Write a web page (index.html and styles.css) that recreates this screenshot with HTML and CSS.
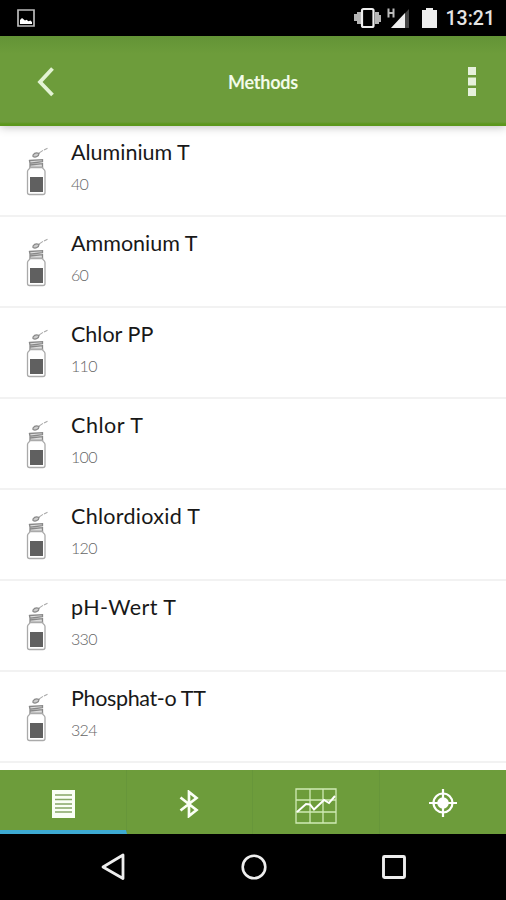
FILE: index.html
```html
<!DOCTYPE html>
<html lang="en">
<head>
<meta charset="utf-8">
<title>Methods</title>
<link rel="stylesheet" href="styles.css">
</head>
<body>
<svg class="defs" width="0" height="0" aria-hidden="true">
  <symbol id="bottle" viewBox="0 0 24 50">
    <path d="M12 7l2-1.600M14 5.400l3-2M18 3l3.500-1.800" fill="none" stroke="#aaa" stroke-width="1.100"/>
    <path d="M7 8c1.500-2.200 4-2.500 6-1.500 0 2.500-3.500 4.500-6 3z" fill="#ccc" stroke="#888" stroke-width="1.200"/>
    <path d="M3.500 13.500l13-.8v2l-12.500 1.500zM4 18l12.500-1.300M4 16v4.500h12.500V16" fill="#ddd" stroke="#888" stroke-width="1.300"/>
    <path d="M4 20.500c0 1.500-2.500 1.500-2.500 4v21q0 2 2 2h13.500q2 0 2-2v-21c0-2.500-2.500-2.500-2.500-4z" fill="#fff" stroke="#aaa" stroke-width="1.300"/>
    <path d="M4 30h13v15H4z" fill="#606060"/>
  </symbol>
</svg>
<div class="screen">
  <div class="status">
    <svg class="status-pic" width="18" height="18" viewBox="0 0 18 18"><path d="M1 1h16v16H1z" fill="none" stroke="#bbb" stroke-width="1.700"/><path d="M3 15v-4l2-2 3 2.500 1.500-.8 2 1.500 2-.8L15 13v2z" fill="#fff"/></svg>
    <svg width="75" height="24" viewBox="0 0 75 24">
      <path d="M0 8h3V6h4v12H3v-3H0zM27 9v7h-2v2h-4V6h4v3z" fill="#b5b5b5"/>
      <rect x="8" y="3" width="11.500" height="18" rx="1.500" fill="#000" stroke="#eee" stroke-width="2.200"/>
      <path d="M34.500 2.500v9M39.500 2.500v9M34 7h6" stroke="#bbb" stroke-width="2"/>
      <path d="M37 22L55 3v19z" fill="#444"/><path d="M37 22L51 7v15z" fill="#eee"/>
    </svg>
    <svg class="battery" width="15" height="20" viewBox="0 0 15 20"><path d="M4 0h7v2h4v18H0V2h4z" fill="#eee"/></svg>
    <span class="clock">13:21</span>
  </div>
  <header class="bar">
    <svg width="18" height="30" viewBox="0 0 18 30"><path d="M15.500 1.500L3 15l12.500 13" fill="none" stroke="#e3f3d4" stroke-width="3.800"/></svg>
    <h1>Methods</h1>
    <svg width="8" height="30" viewBox="0 0 8 30"><path d="M0 0h8v8H0zM0 10.500h8v8H0zM0 21h8v8H0z" fill="#e6f1dc"/></svg>
  </header>
  <main class="list">
    <div class="row"><svg class="bottle"><use href="#bottle"/></svg><div><h2>Aluminium T</h2><p>40</p></div></div>
    <div class="row"><svg class="bottle"><use href="#bottle"/></svg><div><h2>Ammonium T</h2><p>60</p></div></div>
    <div class="row"><svg class="bottle"><use href="#bottle"/></svg><div><h2>Chlor PP</h2><p>110</p></div></div>
    <div class="row"><svg class="bottle"><use href="#bottle"/></svg><div><h2 class="chlor">Chlor T</h2><p>100</p></div></div>
    <div class="row"><svg class="bottle"><use href="#bottle"/></svg><div><h2 class="dioxid">Chlordioxid T</h2><p>120</p></div></div>
    <div class="row"><svg class="bottle"><use href="#bottle"/></svg><div><h2 class="ph">pH-Wert T</h2><p>330</p></div></div>
    <div class="row"><svg class="bottle"><use href="#bottle"/></svg><div><h2 class="phosphat">Phosphat-o TT</h2><p>324</p></div></div>
  </main>
  <nav class="tabs">
    <div class="tab active"><svg width="23" height="28" viewBox="0 0 23 28"><path d="M0 0h23v28H0z" fill="#fafff5"/><path d="M3 5h17M3 9.500h17M3 14h17M3 18h17M3 22h17" stroke="#86a766" stroke-width="1.500"/></svg></div>
    <div class="tab"><svg width="20" height="28" viewBox="0 0 20 28"><path d="M1.500 7.500L17.500 20 10 26V2l7.500 6L1.500 20.500" fill="none" stroke="#fafff5" stroke-width="2.700"/></svg></div>
    <div class="tab chart"><svg width="42" height="36" viewBox="0 0 42 36"><path d="M1 1h40v34H1zM15 1v34M28 1v34M1 12h40M1 24h40" fill="none" stroke="#d0eab5" stroke-width="1.300"/><path d="M2 24l9-8 4 .5 4 5L29 12l5 3 6-7" fill="none" stroke="#fff" stroke-width="2"/></svg></div>
    <div class="tab target"><svg width="28" height="28" viewBox="0 0 28 28"><circle cx="14" cy="14" r="9.500" fill="none" stroke="#fff" stroke-width="2.200"/><circle cx="14" cy="14" r="5.800" fill="#fff"/><path d="M14 0v28M0 14h28" stroke="#fff" stroke-width="2.200"/></svg></div>
  </nav>
  <div class="system">
    <svg width="26" height="28" viewBox="0 0 26 28"><path d="M23 2v23.500L3 14z" fill="none" stroke="#eee" stroke-width="2.800" stroke-linejoin="round"/></svg>
    <svg width="26" height="26" viewBox="0 0 26 26"><circle cx="13" cy="13" r="11.300" fill="none" stroke="#eee" stroke-width="2.600"/></svg>
    <svg width="24" height="24" viewBox="0 0 24 24"><rect x="1.500" y="1.500" width="21" height="21" rx="1" fill="none" stroke="#eee" stroke-width="2.900"/></svg>
  </div>
</div>
</body>
</html>
```
FILE: styles.css
```css
* { box-sizing: border-box; }
body { margin: 0; background: #fff; font-family: Lato, "Liberation Sans", sans-serif; }
h1, h2, p { margin: 0; }
svg { display: block; flex: none; }
.defs { position: absolute; }
.screen { width: 506px; height: 900px; display: flex; flex-direction: column; overflow: hidden; }
.status { height: 36px; flex: none; background: #000; display: flex; align-items: center; padding: 0 11px 0 17px; }
.status-pic { margin-right: 319px; }
.battery { margin-left: -7px; }
.clock { margin-left: auto; color: #e4e4e4; font: 500 19.5px/36px Roboto, sans-serif; padding-top: 2px; }
.bar { height: 90px; flex: none; display: flex; align-items: center; justify-content: space-between; padding: 1px 30px 0 37px; background: linear-gradient(#639336, #6d9c3b 18px, #6d9c3b 86px, #5c971d 88px); box-shadow: 0 1px 9px rgba(0, 0, 0, .26); z-index: 1; }
.bar h1 { font-size: 18px; font-weight: 700; line-height: 24px; letter-spacing: -.2px; color: #f2fbe9; margin-left: 3px; }
.list { height: 644px; flex: none; padding-bottom: 7px; overflow: hidden; }
.row { height: 91px; border-bottom: 2px solid #f2f2f2; display: flex; padding: 13px 0 0 26px; }
.bottle { width: 24px; height: 50px; margin: 8px 21px 0 0; }
.row h2 { font-size: 21.500px; font-weight: 400; line-height: 28px; color: #181818; white-space: nowrap; margin-top: -1px; }
.row .chlor { letter-spacing: .55px; }
.row .dioxid { letter-spacing: .3px; }
.row .ph { letter-spacing: .45px; }
.row .phosphat { letter-spacing: -.35px; }
.row p { font-size: 16px; font-weight: 300; line-height: 22px; color: #666; margin-top: 7px; letter-spacing: -.7px; }
.tabs { height: 64px; flex: none; background: #6d9c3b; display: grid; grid-template-columns: repeat(4, 1fr); }
.tab { display: flex; align-items: center; justify-content: center; padding-top: 4px; border-right: 1px solid #67963a; }
.tab.active { border-bottom: 4px solid #3daad2; padding: 8px 0 0 1px; }
.chart { padding: 7px 0 0 1px; }
.target { padding-top: 1px; border: 0; }
.system { height: 66px; background: #000; display: flex; align-items: center; justify-content: space-between; padding: 0 100px; }
```
